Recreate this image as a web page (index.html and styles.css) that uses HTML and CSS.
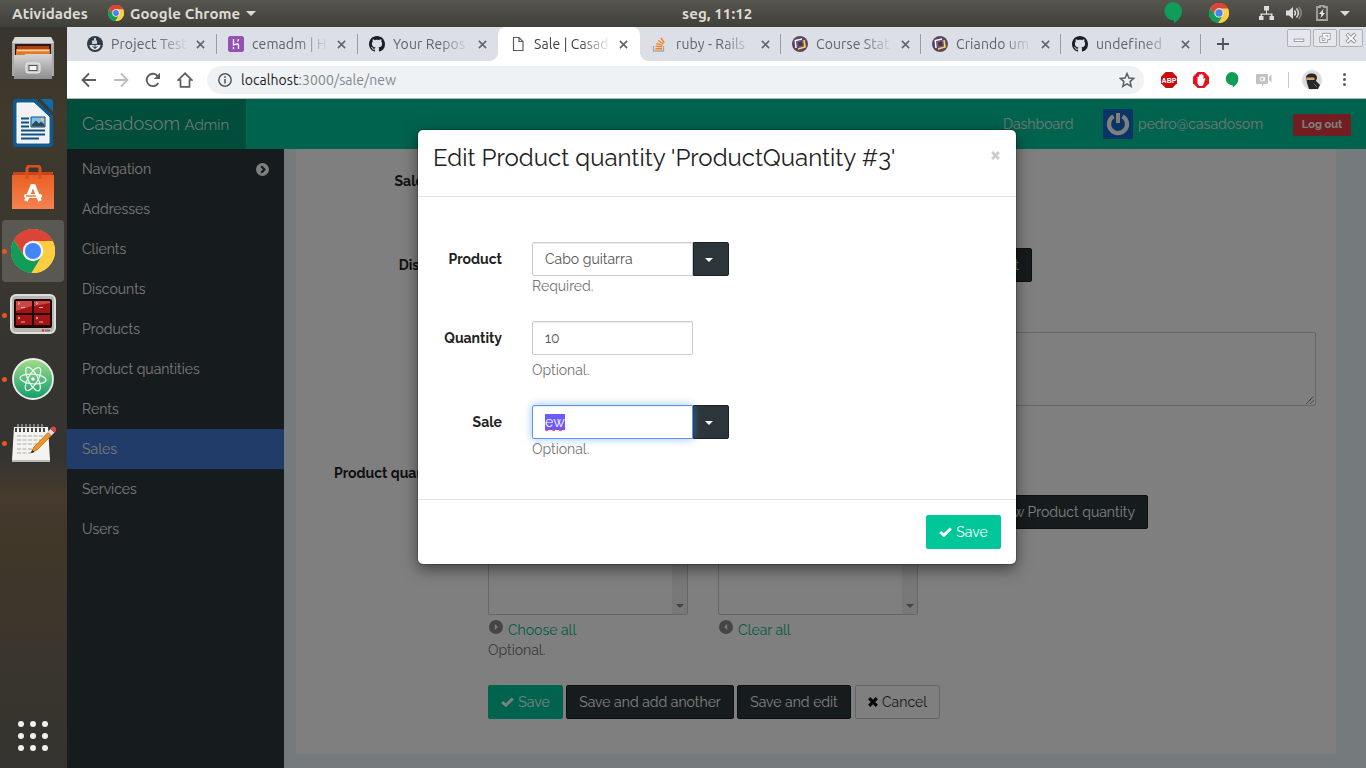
FILE: index.html
```html
<!DOCTYPE html>
<html lang="pt-BR">
<head>
<meta charset="utf-8">
<title>Sale | Casadosom Admin</title>
<link rel="stylesheet" href="styles.css">
</head>
<body>
<svg class="defs" aria-hidden="true">
  <defs>
    <symbol id="chrome" viewBox="0 0 44 44">
      <circle cx="22" cy="22" r="22" fill="#fdd04c"/>
      <path d="M22 22 2.9 11A22 22 0 0 1 41.1 11.500z" fill="#db4437"/>
      <path d="M22 12h19.600A22 22 0 0 0 2.900 11L13 27z" fill="#db4437"/>
      <path d="M2.900 11A22 22 0 0 0 20.500 44L31 27 22 31 13 27z" fill="#0f9d58"/>
      <path d="M31 27 20.500 44A22 22 0 0 0 41.600 12H22z" fill="#ffcd40"/>
      <circle cx="22" cy="22" r="10.200" fill="#f4f4f4"/>
      <circle cx="22" cy="22" r="8" fill="#4285f4"/>
    </symbol>
    <symbol id="x" viewBox="0 0 10 10"><path d="M1 1l8 8M9 1L1 9" stroke="#5f6368" stroke-width="1.700"/></symbol>
    <symbol id="github" viewBox="0 0 16 16"><path fill="#1b1f23" d="M8 0C3.580 0 0 3.580 0 8c0 3.540 2.290 6.530 5.470 7.590.4.070.55-.17.55-.38 0-.19-.01-.82-.01-1.490-2.010.37-2.530-.49-2.690-.94-.09-.23-.48-.94-.82-1.130-.28-.15-.68-.52-.01-.53.63-.01 1.080.58 1.230.82.72 1.210 1.870.87 2.330.66.07-.52.28-.87.51-1.070-1.780-.2-3.640-.89-3.640-3.950 0-.87.31-1.590.82-2.150-.08-.2-.36-1.020.08-2.120 0 0 .67-.21 2.200.82.64-.18 1.320-.27 2-.27s1.360.09 2 .27c1.530-1.040 2.200-.82 2.200-.82.44 1.100.16 1.920.08 2.120.51.56.82 1.270.82 2.150 0 3.070-1.870 3.750-3.650 3.950.29.25.54.73.54 1.480 0 1.070-.01 1.930-.01 2.200 0 .21.15.46.55.38A8 8 0 0 0 16 8c0-4.420-3.580-8-8-8z"/></symbol>
    <symbol id="course" viewBox="0 0 16 16"><circle cx="8" cy="8" r="8" fill="#5c4464"/><path d="M4 12 3.300 4.500 10 3" fill="none" stroke="#fff" stroke-width="1.500"/><path d="M12 4 13 11l-7 2" fill="none" stroke="#f7d84a" stroke-width="1.700"/><path d="M5.300 5.800l5.200-.9.800 5-5 1.200z" fill="#4a3356" stroke="#8f7a98" stroke-width=".6"/></symbol>
    <symbol id="check" viewBox="0 0 13 10"><path d="M1.200 5 4.800 8.300 11.800 1.500" fill="none" stroke="currentColor" stroke-width="3"/></symbol>
    <symbol id="times" viewBox="0 0 10 10"><path d="M1.200 1.200l7.600 7.600M8.800 1.200 1.200 8.800" stroke="currentColor" stroke-width="3.200"/></symbol>
    <symbol id="hang" viewBox="0 0 18 22"><path fill="#109d58" d="M9 0a9 9 0 0 1 9 9.200c0 5-4 9.500-8 12v-3A9 9 0 1 1 9 0z"/></symbol>
  </defs>
</svg>

<header class="topbar">
  <span class="tb-activities">Atividades</span>
  <svg class="tb-chrome"><use href="#chrome"/></svg>
  <span class="tb-app">Google Chrome</span>
  <i class="caret-light"></i>
  <span class="tb-clock">seg, 11:12</span>
  <div class="tray">
    <svg width="18" height="22"><use href="#hang"/></svg>
    <svg class="tray-chrome"><use href="#chrome"/></svg>
    <svg class="tray-net" viewBox="0 0 15 14"><path fill="#ddd" d="M5 0h5v4.500H8v3h5.500V10H15v4h-4.500v-4H12V8.700H3V10h1.500v4H0v-4h1.500V7.500H7v-3H5z"/></svg>
    <svg class="tray-vol" viewBox="0 0 16 14"><path fill="#ddd" d="M0 4.500h3L7 1v12L3 9.500H0z"/><path d="M8.500 4.500q2 2.500 0 5M10.500 2.500q4 4.500 0 9" fill="none" stroke="#ddd" stroke-width="1.500"/><path d="M12.700 1q5 6 0 12" fill="none" stroke="#888780" stroke-width="1.500"/></svg>
    <svg class="tray-bat" viewBox="0 0 12 16"><path d="M4 2V.8h4V2h3v13H1V2z" fill="none" stroke="#a5a49f" stroke-width="1.800"/><path d="M7.500 4 3 9h2.500L4.500 13 9 8H6.700z" fill="#eee"/></svg>
    <i class="caret-light"></i>
  </div>
</header>

<div class="desktop">
  <nav class="dock">
    <div class="tile"><svg width="42" height="46" viewBox="0 0 42 46">
      <defs><linearGradient id="gm" x2="0" y2="1"><stop stop-color="#d6d6d6"/><stop offset="1" stop-color="#8d8d8d"/></linearGradient></defs>
      <path d="M3 1h36l3 5v34H0V6z" fill="#aaa"/><path d="M3 1h36l3 6H0z" fill="#dadada"/><path d="M3 8h36v14H3z" fill="#2e1a12"/><path d="M5 10h32v3H5z" fill="#a8421c"/><path d="M4 13h34v7H4z" fill="#e8752a"/><path d="M5 14.500h32" stroke="#ffd9a0" stroke-width="1.500"/>
      <path d="M2 19h10l2-1h26v25H2z" fill="url(#gm)"/><rect x="14" y="27" width="14" height="10" rx="2" fill="#c9c9c9" stroke="#eee"/><rect x="17" y="29.500" width="8" height="5" fill="#f4f4f4" stroke="#555"/></svg></div>
    <div class="tile"><svg width="40" height="48" viewBox="0 0 40 48">
      <path d="M3 0h20l17 17v28a3 3 0 0 1-3 3H3a3 3 0 0 1-3-3V3a3 3 0 0 1 3-3z" fill="#0d5a94"/><path d="M28 0h9a3 3 0 0 1 3 3v10z" fill="#0d6cab"/><path d="M4 4h17l15 14v26H4z" fill="#f2f2f2" stroke="#fff"/>
      <path d="M8 19.500h8M8 23.500h8M8 27.500h8M8 31.500h24M8 35.500h24M8 39.500h18" stroke="#0e5283" stroke-width="2"/><path d="M18 18h14v10H18z" fill="#7cc1f0" stroke="#0e5283"/><path d="M19 27.500v-2l4-4 3 3 2-2 3.500 3v2z" fill="#37474f"/><circle cx="29.500" cy="20.500" r="1.500" fill="#f5cf4b"/></svg></div>
    <div class="tile"><svg width="42" height="44" viewBox="0 0 42 44">
      <defs><linearGradient id="go" x2="0" y2="1"><stop stop-color="#ea6024"/><stop offset="1" stop-color="#f58351"/></linearGradient></defs>
      <path d="M1 7h40v8H1z" fill="#c8451a"/><path d="M0 10h42v34H0z" fill="url(#go)"/><path d="M15 14V4q0-3 3-3h7q3 0 3 3v10" fill="none" stroke="#d9501f" stroke-width="3"/>
      <path d="M14 36l6-15h2l6 15" fill="none" stroke="#fff" stroke-width="3.600"/><rect x="12" y="29" width="18" height="4" rx="2" fill="#fff"/><path d="M14 31h10" stroke="#f07a45" stroke-width="1.500"/></svg></div>
    <div class="tile tile-on run"><svg width="44" height="44"><use href="#chrome"/></svg></div>
    <div class="tile run"><svg width="46" height="42" viewBox="0 0 46 42">
      <rect x="1" y="1" width="44" height="38" rx="5" fill="#b6b6b3" stroke="#dededb" stroke-width="2"/><rect x="4" y="5" width="38" height="29" rx="2" fill="#1c0505"/>
      <path d="M6 7h16v12H6zM24 7h16v12H24zM6 21h16v10H6zM24 21h16v10H24z" fill="#a31515"/><path d="M6 7h16v5L6 17zM24 7h16v2l-16 3z" fill="#cd4545"/><path d="M8 8.500l2 1-2 1M11 13.500h4M26 8.500l2 1-2 1M29 13.500h4M8 23l2 1-2 1M11 28h4M26 23l2 1-2 1M29 28h4" fill="none" stroke="#f0c4c4" stroke-width=".9"/><circle cx="33" cy="36.500" r="1.300" fill="#f22"/><path d="M35 36.500h5" stroke="#777" stroke-width="2"/></svg></div>
    <div class="tile run"><svg width="42" height="42" viewBox="0 0 42 42">
      <defs><linearGradient id="ga" x2="0" y2="1"><stop stop-color="#a5dd8a"/><stop offset="1" stop-color="#0f9d6c"/></linearGradient></defs>
      <circle cx="21" cy="21" r="20" fill="url(#ga)" stroke="#eee" stroke-width="1.800"/><g fill="none" stroke="#e9f7ee" stroke-width="1.300"><ellipse cx="21" cy="21" rx="13" ry="4.800" transform="rotate(5 21 21)"/><ellipse cx="21" cy="21" rx="13" ry="4.800" transform="rotate(63 21 21)"/><ellipse cx="21" cy="21" rx="13" ry="4.800" transform="rotate(120 21 21)"/></g><circle cx="21" cy="21" r="1.800" fill="#fff"/></svg></div>
    <div class="tile run"><svg width="46" height="38" viewBox="0 0 46 38">
      <path d="M4 3h34l2 33H2z" fill="#f3f3ef"/><path d="M2 36h38v2H2z" fill="#bbb"/><path d="M6 4v4M10 4v4M14 4v4M18 4v4M22 4v4M26 4v4M30 4v4M34 4v4" stroke="#444" stroke-width="2"/><path d="M8 0v5M12 0v5M16 0v5M20 0v5M24 0v5M28 0v5M32 0v5" stroke="#ccc"/><path d="M7 12h27M7 16h24M7 20h21M7 25h16M7 29h14" stroke="#aaa" stroke-dasharray="4 1.500"/>
      <path d="M21 29l3-6L38 8.500l3.500 3L27 26z" fill="#f0932b" stroke="#ad5f15" stroke-width=".7"/><path d="M37.500 8l3-3 4 3.500-3 3z" fill="#ddd"/><path d="M40 4.500q3-3.500 5.500-1t-1 5z" fill="#e04545"/><path d="M21 29l1.300-3 2.200 2z" fill="#222"/></svg></div>
    <div class="apps"><i></i><i></i><i></i><i></i><i></i><i></i><i></i><i></i><i></i></div>
  </nav>

  <main class="browser">
    <div class="tabs">
      <div class="tab sep"><svg class="fav" viewBox="0 0 16 16"><circle cx="8" cy="8" r="8" fill="#303a44"/><path d="M2.500 9h11q-.5 4.500-5.500 5-5-.5-5.500-5z" fill="#dfe5ea"/><path d="M5 4.500h5V8H5zM7 2h2v3H7z" fill="#c8d0d6"/><path d="M8 8v5M5.500 10.500q2.500 3 5 0" stroke="#303a44" fill="none"/></svg><span class="tt">Project Test</span><svg class="close"><use href="#x"/></svg></div>
      <div class="tab sep"><svg class="fav" viewBox="0 0 16 16"><rect width="16" height="16" rx="2.500" fill="#9352b3"/><path d="M5.500 3v6q5-2 5 0v4M5.500 11v2.300M10.500 3q0 1.500-1 2.500" fill="none" stroke="#fff" stroke-width="1.300"/></svg><span class="tt">cemadm | H</span><svg class="close"><use href="#x"/></svg></div>
      <div class="tab"><svg class="fav"><use href="#github"/></svg><span class="tt">Your Repos</span><svg class="close"><use href="#x"/></svg></div>
      <div class="tab tab-on"><svg class="fav" viewBox="0 0 16 16"><path d="M3.500 1.500h5.500l4 4v9h-9.500zM9 1.500v4h4" fill="none" stroke="#5a5d61" stroke-width="1.200"/></svg><span class="tt">Sale | Casad</span><svg class="close"><use href="#x"/></svg></div>
      <div class="tab tab-n sep"><svg class="fav" viewBox="0 0 16 16"><path d="M1.500 10v5h10v-5" fill="none" stroke="#a5a8ab" stroke-width="1.300"/><path d="M3.500 12.700h6.500M3.700 10.300l6.400.6M4.500 7.500l6 1.800M6.300 4.500l5 3.500M9 2l3.300 4.800" stroke="#f48024" stroke-width="1.400"/></svg><span class="tt">ruby - Rails</span><svg class="close"><use href="#x"/></svg></div>
      <div class="tab tab-n sep"><svg class="fav"><use href="#course"/></svg><span class="tt">Course Stat</span><svg class="close"><use href="#x"/></svg></div>
      <div class="tab tab-n sep"><svg class="fav"><use href="#course"/></svg><span class="tt">Criando um</span><svg class="close"><use href="#x"/></svg></div>
      <div class="tab tab-n sep"><svg class="fav"><use href="#github"/></svg><span class="tt">undefined</span><svg class="close"><use href="#x"/></svg></div>
      <svg class="plus" viewBox="0 0 12 12"><path d="M6 0v12M0 6h12" stroke="#4d5055" stroke-width="1.800"/></svg>
      <div class="winbtns">
        <span><svg viewBox="0 0 23 17"><rect x="6.500" y="9.500" width="10" height="2.500" fill="#fff" stroke="#999ca2"/></svg></span>
        <span><svg viewBox="0 0 23 17"><path d="M9 3.500h8v6.500h-3v3H6V7h3z" fill="#fff" stroke="#999ca2"/><path d="M8.500 8.500h3v2.500h-3zM11.500 6h3v2" fill="none" stroke="#999ca2"/></svg></span>
        <span><svg viewBox="0 0 23 17"><path d="M7 4l9 9M16 4l-9 9" stroke="#94979d" stroke-width="4"/><path d="M7.500 4.500l8 8M15.500 4.500l-8 8" stroke="#fff" stroke-width="2"/></svg></span>
      </div>
    </div>

    <div class="toolbar">
      <svg class="nav-ic" viewBox="0 0 16 16"><path d="M15 8H2M8 1.500 1.500 8 8 14.500" fill="none" stroke="#5a5d61" stroke-width="1.800"/></svg>
      <svg class="nav-ic" viewBox="0 0 16 16"><path d="M1 8h13M8 1.500 14.500 8 8 14.500" fill="none" stroke="#babcbe" stroke-width="1.800"/></svg>
      <svg class="nav-ic" viewBox="0 0 16 16"><path d="M13.300 11A6.200 6.200 0 1 1 12.700 4" fill="none" stroke="#5a5d61" stroke-width="1.900"/><path d="M15 .8v6.200H8.800z" fill="#5a5d61"/></svg>
      <svg class="nav-ic" viewBox="0 0 16 16"><path d="M8 1.300 1.300 8H3.500v6.800h9V8h2.200z" fill="none" stroke="#5a5d61" stroke-width="1.700"/></svg>
      <div class="omni">
        <svg class="info" viewBox="0 0 14 14"><circle cx="7" cy="7" r="6.200" fill="none" stroke="#5a5d61" stroke-width="1.500"/><path d="M7 6v4.500M7 3.300v1.600" stroke="#5a5d61" stroke-width="1.600"/></svg>
        <span class="url"><b>localhost</b>:3000/sale/new</span>
        <svg class="star" viewBox="0 0 14 14"><path d="M7 1.300l1.700 3.900 4.200.4-3.200 2.800 1 4.200L7 10.400l-3.700 2.200 1-4.200L1.100 5.600l4.200-.4z" fill="none" stroke="#5a5d61" stroke-width="1.300"/></svg>
      </div>
      <div class="exts">
        <svg width="16" height="16" viewBox="0 0 16 16"><path d="M4.700 0h6.600L16 4.700v6.600L11.300 16H4.700L0 11.300V4.700z" fill="#c70d0d"/><text x="8" y="10.600" class="abp">ABP</text></svg>
        <svg width="16" height="16" viewBox="0 0 16 16"><path d="M4.700 0h6.600L16 4.700v6.600L11.300 16H4.700L0 11.300V4.700z" fill="#e8101a"/><path d="M4.500 7.500V5q.8-.8 1.500 0V3q.8-.8 1.500 0V2.200q.8-.8 1.500 0V3q.8-.8 1.500 0v4.500l1-1.500q1 0 .8 1L10.500 12l-1 2H6.200l-1.700-2.500z" fill="#fff"/></svg>
        <svg width="14" height="16" viewBox="0 0 18 22"><use href="#hang"/></svg>
        <svg width="17" height="14" viewBox="0 0 17 14"><path d="M2 1h10q1 0 1 1v8q0 1-1 1H9l-2 2.500V11H2q-1 0-1-1V2q0-1 1-1zM14 4l2.500-2.500v8L14 7z" fill="#c3c3c3"/><circle cx="7" cy="6" r="2" fill="none" stroke="#fff"/><path d="M9.300 4v4" stroke="#fff"/></svg>
      </div>
      <i class="rule"></i>
      <svg class="me" viewBox="0 0 20 20"><circle cx="10" cy="10" r="10" fill="#dcdcdc"/><path d="M4 7q1-4 6-3.500 5 0 5 4.500l-1 3 4 4-2 4H7L5 13z" fill="#26282b"/><path d="M4.500 7.500h8V10h-8z" fill="#d5a271"/><path d="M12 14l3 3" stroke="#777"/></svg>
      <div class="dots"><i></i><i></i><i></i></div>
    </div>

    <div class="page">
      <div class="navbar">
        <div class="brand">Casadosom <small>Admin</small></div>
        <span class="dash">Dashboard</span>
        <svg class="avatar" viewBox="0 0 30 30"><rect width="30" height="30" fill="#126acb"/><path d="M10.500 7.300A9 9 0 1 0 19.500 7.300" fill="none" stroke="#fff" stroke-width="4.200"/><path d="M15 4v10" stroke="#fff" stroke-width="4"/></svg>
        <span class="mail">pedro@casadosom</span>
        <span class="logout">Log out</span>
      </div>
      <div class="cols">
        <ul class="side">
          <li>Navigation<svg viewBox="0 0 12 12"><circle cx="6" cy="6" r="6" fill="#fff"/><path d="M4.800 3 7.800 6 4.800 9" fill="none" stroke="#2c363a" stroke-width="2"/></svg></li>
          <li>Addresses</li><li>Clients</li><li>Discounts</li><li>Products</li><li>Product quantities</li><li>Rents</li><li class="on">Sales</li><li>Services</li><li>Users</li>
        </ul>
        <form class="panel">
          <div class="row row-date"><label>Sale date</label></div>
          <div class="row row-disc"><label>Discount</label><div class="disc-field"><span class="btn dark">Add a new Discount</span></div></div>
          <div class="row row-text"><label></label><div class="area"><svg viewBox="0 0 8 8"><path d="M.5 7.500l7-7M4.500 7.500l3-3" stroke="#444" stroke-dasharray="1.200 .5"/></svg></div></div>
          <div class="row row-pq"><label>Product quantities</label>
            <div class="pq">
              <div class="pick"><div class="list"><div class="track"><i></i></div></div><a><svg viewBox="0 0 14 14"><circle cx="7" cy="7" r="7" fill="#8a8a8a"/><path d="M5.800 4l3 3-3 3z" fill="#fff"/></svg>Choose all</a><p class="help">Optional.</p></div>
              <div class="pick"><div class="list"><div class="track"><i></i></div></div><a><svg viewBox="0 0 14 14"><circle cx="7" cy="7" r="7" fill="#8a8a8a"/><path d="M8.200 4l-3 3 3 3z" fill="#fff"/></svg>Clear all</a></div>
              <span class="btn dark add-pq">Add a new Product quantity</span>
            </div>
          </div>
          <div class="actions">
            <span class="btn green"><svg class="ic-check"><use href="#check"/></svg>Save</span>
            <span class="btn dark w168">Save and add another</span>
            <span class="btn dark w114">Save and edit</span>
            <span class="btn plain"><svg class="ic-x"><use href="#times"/></svg>Cancel</span>
          </div>
        </form>
      </div>

      <div class="backdrop">
        <div class="modal">
          <div class="mhead"><h3>Edit Product quantity 'ProductQuantity #3'</h3><svg><use href="#times"/></svg></div>
          <div class="mbody">
            <div class="field"><label>Product</label><div><div class="combo"><span class="input joined">Cabo guitarra</span><span class="drop"><i></i></span></div><p class="help">Required.</p></div></div>
            <div class="field"><label>Quantity</label><div><div class="combo"><span class="input">10</span></div><p class="help gap">Optional.</p></div></div>
            <div class="field"><label>Sale</label><div><div class="combo"><span class="input joined focus"><mark>ew</mark></span><span class="drop"><i></i></span></div><p class="help">Optional.</p></div></div>
          </div>
          <div class="mfoot"><span class="btn green"><svg class="ic-check"><use href="#check"/></svg>Save</span></div>
        </div>
      </div>
    </div>
  </main>
</div>
</body>
</html>
```
FILE: styles.css
```css
* { box-sizing: border-box; }
body { margin: 0; width: 1366px; height: 768px; overflow: hidden; font-family: Ubuntu, "Noto Sans", sans-serif; font-size: 14px; }
svg { display: block; flex: none; }
.defs { position: absolute; width: 0; height: 0; }

/* desktop top bar */
.topbar { height: 27px; display: flex; align-items: center; background: linear-gradient(#575550, #403f3a); color: #dfdbd2; font-family: Ubuntu, "Open Sans", sans-serif; font-weight: 700; font-size: 15px; letter-spacing: .1px; white-space: nowrap; padding: 0 16px 1px 0; }
.tb-activities { width: 96px; padding-left: 12px; }
.tb-chrome { width: 16px; height: 16px; margin: 0 6px 0 12px; }
.tb-app { width: 111px; }
.caret-light { border: 5px solid transparent; border-top: 5px solid #dedbd4; border-bottom: 0; margin-left: 5px; }
.tb-clock { margin-left: 426px; width: 80px; }
.tray { margin-left: auto; display: flex; align-items: center; }
.tray-chrome { width: 20px; height: 20px; margin-left: 27px; }
.tray-net { width: 15px; height: 14px; margin-left: 30px; }
.tray-vol { width: 16px; height: 14px; margin-left: 12px; }
.tray-bat { width: 12px; height: 16px; margin-left: 14px; }
.tray .caret-light { margin-left: 12px; }

/* dock */
.desktop { display: flex; height: 741px; }
.dock { width: 67px; padding: 1px 3px 0 2px; display: flex; flex-direction: column; gap: 2px; background: linear-gradient(#38352e 0, #40392c 12%, #3b382f 25%, #353430 45%, #353430 58%, #453a2d 63%, #403729 70%, #38352e 90%, #34332f); }
.tile { position: relative; height: 62px; border-radius: 4px; display: flex; align-items: center; justify-content: center; }
.tile-on { background: #595853; }
.run::before { content: ""; position: absolute; left: 0; top: 29px; width: 5px; height: 5px; border-radius: 50%; background: #e95420; }
.apps { margin: auto auto 17px 16px; display: grid; grid-template-columns: repeat(3, 6px); gap: 6px; }
.apps i { height: 6px; border-radius: 50%; background: #f0f0ee; }

/* browser chrome */
.browser { flex: 1; display: flex; flex-direction: column; background: #fff; min-width: 0; }
.tabs { height: 34px; display: flex; background: #dcdfe6; padding-left: 8px; }
.tab { width: 141px; padding-left: 12px; display: flex; align-items: center; color: #5f6368; position: relative; font-size: 14px; }
.tab-n { width: 140px; }
.tab-on { width: 142px; background: #fff; border-radius: 8px 8px 0 0; color: #3c4043; }
.tab-on::before, .tab-on::after { content: ""; position: absolute; bottom: 0; width: 8px; height: 8px; }
.tab-on::before { left: -8px; background: radial-gradient(circle at 0 0, transparent 7.5px, #fff 8px); }
.tab-on::after { right: -8px; background: radial-gradient(circle at 100% 0, transparent 7.5px, #fff 8px); }
.sep::after { content: ""; position: absolute; right: -1px; top: 7px; height: 20px; width: 1px; background: #9a9ca3; }
.fav { width: 16px; height: 16px; }
.tt { width: 77px; margin-left: 8px; overflow: hidden; white-space: nowrap; letter-spacing: .1px; -webkit-mask-image: linear-gradient(90deg, #000 60%, transparent); mask-image: linear-gradient(90deg, #000 60%, transparent); }
.close { width: 9px; height: 9px; margin-left: 8px; }
.plus { width: 12px; height: 12px; margin: 11px 0 0 17px; }
.winbtns { margin: 2px 3px 0 auto; display: flex; gap: 2px; height: 18px; }
.winbtns span { width: 24px; border: 1px solid #aeb1b8; border-radius: 2px; background: #e5e7ec; }

.toolbar { height: 38px; display: flex; align-items: center; border-bottom: 1px solid #b5b5b5; padding-left: 14px; }
.nav-ic { width: 16px; height: 16px; margin-right: 16px; }
.omni { width: 937px; height: 28px; margin-left: -2px; border-radius: 14px; background: #eff2f4; display: flex; align-items: center; padding: 0 9px 0 11px; }
.info { width: 14px; height: 14px; }
.url { margin-left: 9px; color: #80868b; font-size: 14px; letter-spacing: .07px; }
.url b { font-weight: 400; color: #202124; }
.star { width: 16px; height: 16px; margin-left: auto; }
.exts { display: flex; align-items: center; gap: 16px; margin-left: 17px; }
.abp { fill: #fff; font: 700 7px "Liberation Sans", sans-serif; text-anchor: middle; letter-spacing: 0; }
.rule { width: 1px; height: 16px; margin-left: 16px; background: #c6c8ca; }
.me { width: 20px; height: 20px; margin-left: 13px; }
.dots { margin-left: 21px; display: grid; gap: 2px; }
.dots i { width: 3px; height: 3px; border-radius: 50%; background: #5a5d61; }

/* admin page */
.page { position: relative; height: 669px; display: flex; flex-direction: column; font-family: Raleway, Lato, sans-serif; font-size: 14px; line-height: 20px; color: #222; background: #eaf4fa; }
.navbar { height: 50px; display: flex; align-items: center; background: #00c79a; color: #fff; padding-right: 15px; }
.brand { width: 179px; height: 50px; line-height: 50px; padding-left: 15px; background: #009a76; font-size: 18px; font-weight: 350; margin-right: auto; white-space: nowrap; }
.brand small { font-size: 15px; }
.dash { width: 100px; }
.avatar { width: 30px; height: 30px; }
.mail { width: 160px; padding-left: 5px; }
.dash, .mail { font-weight: 400; color: #ececec; }
.logout { width: 58px; height: 22px; line-height: 22px; border-radius: 2px; text-align: center; background: #e53a45; font-size: 11px; font-weight: 700; margin-top: 2px; }
.cols { flex: 1; display: flex; min-height: 0; }
.side { width: 217px; margin: 0; padding: 0; list-style: none; background: #2c363a; color: #f0f0f0; }
.side li { height: 40px; padding: 0 15px; display: flex; align-items: center; justify-content: space-between; }
.side .on { background: #4278d2; }
.side svg { width: 13px; height: 13px; }
.panel { width: 1040px; height: 605px; margin-left: 12px; padding-right: 20px; background: #fff; }
.row { display: flex; gap: 30px; }
.row label { width: 162px; text-align: right; font-weight: 700; padding-top: 7px; flex: none; white-space: nowrap; }
.row-date { height: 99px; padding-top: 15px; }
.row-disc { height: 84px; }
.disc-field { width: 544px; display: flex; justify-content: flex-end; }
.row-text { height: 124px; }
.area { flex: 1; height: 74px; border: 1px solid #ccc; border-radius: 2px; display: flex; justify-content: flex-end; align-items: flex-end; padding: 1px; }
.area svg { width: 8px; height: 8px; }
.row-pq { height: 229px; }
.pq { display: flex; gap: 30px; padding-top: 39px; width: 660px; }
.pick { width: 200px; flex: none; }
.list { height: 120px; border: 1px solid #ccc; border-radius: 2px; display: flex; justify-content: flex-end; }
.track { width: 15px; background: #f1f1f1; display: flex; align-items: flex-end; justify-content: center; }
.track i { border: 4px solid transparent; border-top-color: #888; border-bottom: 0; margin-bottom: 6px; }
.pick a { display: flex; height: 25px; padding-top: 5px; color: #00b88e; }
.pick a svg { width: 14px; height: 14px; margin: 0 5px 0 1px; }
.help { margin: 0; color: #737373; }
.btn { height: 34px; line-height: 32px; border: 1px solid; border-radius: 2px; display: flex; align-items: center; justify-content: center; white-space: nowrap; padding: 0 12px; }
.pq .add-pq { width: 200px; flex: none; justify-content: flex-end; }
.dark { background: #2c363a; border-color: #1b2124; color: #fff; }
.green { width: 75px; background: #00c79a; border-color: #00c79a; color: #fff; }
.plain { width: 85px; border-color: #ccc; margin-left: 1px; color: #333; }
.actions { display: flex; gap: 3px; padding-left: 192px; }
.w168 { width: 168px; }
.w114 { width: 114px; }
.ic-check { width: 13px; height: 10px; margin-right: 4px; }
.ic-x { width: 10px; height: 10px; margin-right: 4px; color: #111; }

/* modal */
.backdrop { position: absolute; inset: 0; background: rgba(0, 0, 0, .5); padding: 31px 0 0 351px; }
.modal { width: 598px; height: 434px; background: #fff; border-radius: 5px; box-shadow: 0 5px 15px rgba(0, 0, 0, .5), 0 0 0 1px rgba(0, 0, 0, .2); }
.mhead { height: 67px; border-bottom: 1px solid #e3e3e3; padding: 15px; display: flex; justify-content: space-between; }
.mhead h3 { margin: 0; font-size: 24px; line-height: 26px; font-weight: 400; white-space: nowrap; }
.mhead svg { width: 9px; height: 9px; color: #ccc; margin: 6px 1px 0 0; }
.mbody { height: 302px; padding-top: 45px; display: flex; flex-direction: column; gap: 25px; }
.field { display: flex; gap: 30px; }
.field label { width: 84px; text-align: right; font-weight: 700; padding-top: 7px; }
.combo { display: flex; height: 34px; }
.input { width: 161px; border: 1px solid #ccc; border-radius: 2px; padding: 6px 12px; color: #555; box-shadow: inset 0 1px 1px rgba(0, 0, 0, .075); }
.joined { border-radius: 2px 0 0 2px; }
.focus { position: relative; z-index: 1; border-color: #579aeb; box-shadow: inset 0 1px 1px rgba(0, 0, 0, .075), 0 0 8px rgba(87, 154, 235, .6); }
.input mark { display: inline-block; line-height: 16px; background: #6b5cff; color: #fff; text-decoration: underline wavy #e0218a 1px; text-underline-offset: 0; letter-spacing: .3px; }
.drop { width: 36px; background: #2c363a; border: 1px solid #1b2124; border-radius: 0 2px 2px 0; display: flex; align-items: center; justify-content: center; padding-right: 4px; }
.drop i { border: 4px solid transparent; border-top-color: #fff; border-bottom: 0; margin-top: 2px; }
.help.gap { padding-top: 5px; }
.mfoot { border-top: 1px solid #e3e3e3; padding: 15px; display: flex; justify-content: flex-end; }
```
